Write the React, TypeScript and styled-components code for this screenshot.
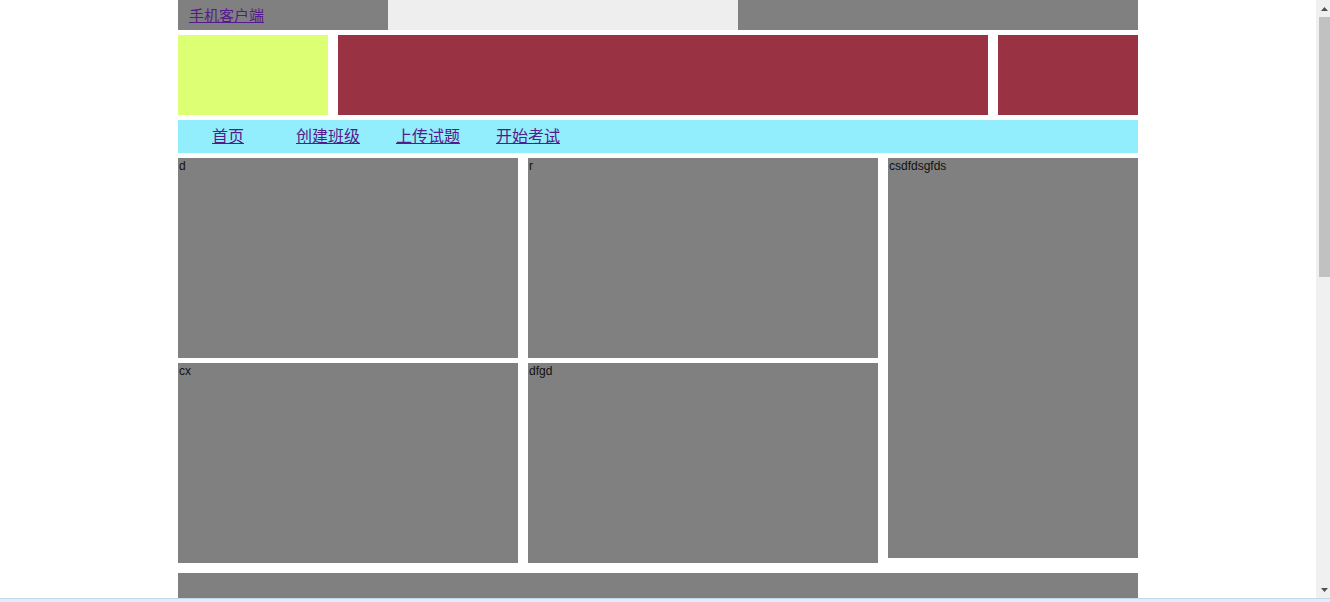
import React from "react";
import styled, { createGlobalStyle } from "styled-components";

const Global = createGlobalStyle`
  html, body { margin: 0; padding: 0; background: #ffffff; overflow: hidden; }
  body { font-family: "Liberation Sans", Arial, "Noto Sans CJK SC", sans-serif; }
  a { color: #551a8b; }
`;

const Frame = styled.div`
  height: 100vh;
  display: flex;
  flex-direction: column;
`;

const Viewport = styled.div`
  flex: 1;
  min-height: 0;
  display: flex;
`;

const Main = styled.div`
  flex: 1;
  min-width: 0;
  overflow: hidden;
`;

const ScrollTrack = styled.div`
  width: 14px;
  background: #f0f0f0;
  display: flex;
  flex-direction: column;
  align-items: flex-end;
`;

const ArrowBox = styled.div`
  height: 17px;
  width: 11px;
  display: flex;
  align-items: center;
  justify-content: center;
`;

const Thumb = styled.div`
  width: 11px;
  height: 260px;
  background: #c1c1c1;
`;

const TrackFill = styled.div`
  flex: 1;
`;

const StatusLine = styled.div`
  height: 4px;
  border-top: 1px solid #c2d7ec;
  background: #e3edf8;
  box-sizing: border-box;
`;

const Page = styled.div`
  width: 960px;
  margin: 0 auto;
  display: flex;
  flex-direction: column;
`;

const TopBar = styled.div`
  display: flex;
  height: 30px;
`;

const TopCell = styled.div<{ $w: number; $bg: string }>`
  width: ${(p) => p.$w}px;
  background: ${(p) => p.$bg};
  display: flex;
  align-items: center;
  padding-left: ${(p) => (p.$w === 210 ? 11 : 0)}px;
  box-sizing: border-box;
`;

const TopLink = styled.a`
  font-family: "Noto Sans CJK SC", "Liberation Sans", sans-serif;
  font-size: 15px;
  line-height: 28px;
  color: #551a8b;
`;

const Banner = styled.div`
  display: flex;
  gap: 10px;
  height: 80px;
  margin-top: 5px;
`;

const BannerBlock = styled.div<{ $w: number; $bg: string }>`
  width: ${(p) => p.$w}px;
  background: ${(p) => p.$bg};
`;

const Nav = styled.ul`
  list-style: none;
  margin: 5px 0 0;
  padding: 0;
  height: 33px;
  background: #92eefc;
  display: flex;
`;

const NavItem = styled.li`
  width: 100px;
  text-align: center;
  line-height: 31px;
  font-family: "Noto Sans CJK SC", "Liberation Sans", sans-serif;
  font-size: 16px;
`;

const Content = styled.div`
  margin-top: 5px;
  display: flex;
  gap: 10px;
  align-items: flex-start;
`;

const Grid = styled.div`
  display: grid;
  grid-template-columns: 340px 350px;
  grid-auto-rows: 200px;
  column-gap: 10px;
  row-gap: 5px;
`;

const Panel = styled.div<{ $h?: number }>`
  background: #808080;
  height: ${(p) => (p.$h ? `${p.$h}px` : "auto")};
  font-family: "Liberation Sans", Arial, sans-serif;
  font-size: 12px;
  line-height: 15px;
  color: #111;
  padding: 1px 0 0 1px;
  box-sizing: border-box;
`;

const Side = styled(Panel)`
  width: 250px;
`;

const Footer = styled.div`
  margin-top: 10px;
  height: 60px;
  background: #808080;
`;

function Arrow({ up }: { up: boolean }) {
  return (
    <svg width="7" height="4" viewBox="0 0 7 4">
      <polygon points={up ? "3.5,0 7,4 0,4" : "0,0 7,0 3.5,4"} fill="#505050" />
    </svg>
  );
}

export default function App() {
  return (
    <>
      <Global />
      <Frame>
        <Viewport>
          <Main>
            <Page>
              <TopBar>
                <TopCell $w={210} $bg="#808080">
                  <TopLink href="#">手机客户端</TopLink>
                </TopCell>
                <TopCell $w={350} $bg="#eeeeee" />
                <TopCell $w={400} $bg="#808080" />
              </TopBar>
              <Banner>
                <BannerBlock $w={150} $bg="#dcff73" />
                <BannerBlock $w={650} $bg="#993344" />
                <BannerBlock $w={140} $bg="#993344" />
              </Banner>
              <Nav>
                {["首页", "创建班级", "上传试题", "开始考试"].map((t) => (
                  <NavItem key={t}>
                    <a href="#">{t}</a>
                  </NavItem>
                ))}
              </Nav>
              <Content>
                <Grid>
                  <Panel>d</Panel>
                  <Panel>r</Panel>
                  <Panel>cx</Panel>
                  <Panel>dfgd</Panel>
                </Grid>
                <Side $h={400}>csdfdsgfds</Side>
              </Content>
              <Footer />
            </Page>
          </Main>
          <ScrollTrack>
            <ArrowBox>
              <Arrow up />
            </ArrowBox>
            <Thumb />
            <TrackFill />
            <ArrowBox>
              <Arrow up={false} />
            </ArrowBox>
          </ScrollTrack>
        </Viewport>
        <StatusLine />
      </Frame>
    </>
  );
}
